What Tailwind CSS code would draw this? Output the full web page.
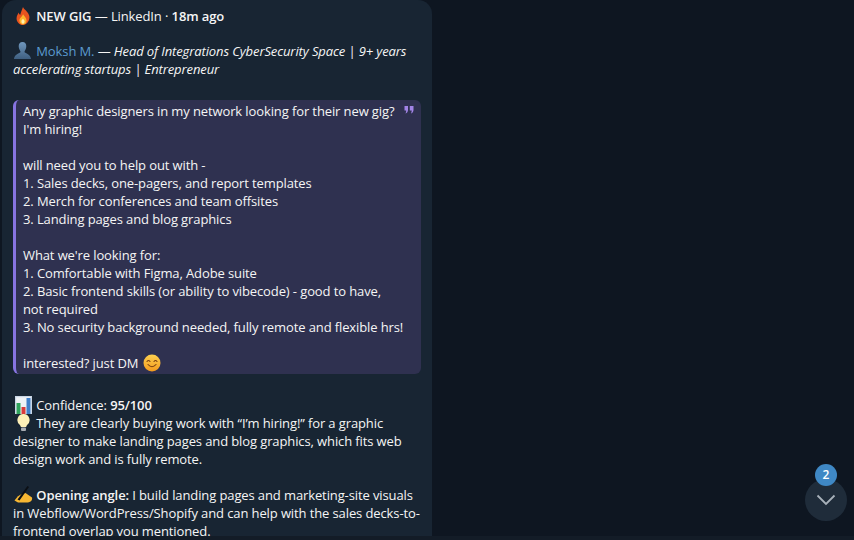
<!DOCTYPE html>
<html lang="en">
<head>
<meta charset="utf-8" />
<title>Chat</title>
<script src="https://cdn.jsdelivr.net/npm/@tailwindcss/browser@4"></script>
</head>
<body class="bg-[#0e1621] overflow-hidden">
<div class="relative w-[854px] h-[540px] overflow-hidden font-['Open_Sans',sans-serif] text-[13px] tracking-[-0.11px] leading-[18px] text-[#f5f5f5]">
  <div class="h-[536px] overflow-hidden">
    <div class="ml-[2px] w-[430px] h-[600px] rounded-t-[14px] bg-[#182533] pl-[11px] pr-[11px] pt-[7px]">
      <p class="h-[18px] whitespace-nowrap">
        <svg class="inline-block w-[18px] h-[18px] -my-[4px] align-baseline ml-[1px] mr-[1px]" viewBox="0 0 20 20"><path d="M10 0c1 3 6 5 7 10 1 5-3 10-7 10s-8-4-7-9c.4-2 1.500-3 2-5 .5 1 1 2.500 2 2.500C7.500 6 9 3 10 0z" fill="#e8531f"/><path d="M10 8c1 2 4 4 4 7s-2 4.500-4 4.500-4-1.500-4-4.500 3-4 4-7z" fill="#fdb32b"/><path d="M10 13c.8 1 1.800 1.800 1.800 3.200s-.8 2.300-1.800 2.300-1.800-.9-1.800-2.300.9-2.200 1.800-3.200z" fill="#fff0b0"/></svg>
        <b class="font-semibold">NEW GIG</b> — LinkedIn · <b class="font-semibold">18m ago</b>
      </p>
      <p class="mt-[17px]">
        <svg class="inline-block w-[19px] h-[19px] -my-[4px] align-baseline mr-[1px]" viewBox="0 0 20 20"><defs><linearGradient id="person" x1="0" y1="0" x2="0" y2="1"><stop offset="0" stop-color="#6f97bd"/><stop offset="1" stop-color="#3f5f80"/></linearGradient></defs><path d="M10 1c2.800 0 4 2 4 4.500S12.500 10 12 11.500c1 1.500 6.500 2 7 7.500H1c.5-5.500 6-6 7-7.500C7.500 10 6 8 6 5.500S7.200 1 10 1z" fill="url(#person)"/></svg>
        <span class="text-[#5b9bd0]">Moksh M.</span> — <i>Head of Integrations CyberSecurity Space | 9+ years accelerating startups | Entrepreneur</i>
      </p>
      <blockquote class="relative mt-[22px] whitespace-nowrap rounded-[6px] border-l-[3px] border-[#8774e1] bg-[#2f3150] pl-[7px] py-[2px]">
        <svg class="absolute right-[7px] top-[5px] w-[10px] h-[10px]" viewBox="0 0 10 10"><path d="M0.500 1h3.500v4c0 1.500-1 3-2.500 3.500C2 7.500 2.200 6.500 2.200 5.500H.5zM5.800 1h3.700v4c0 1.500-1 3-2.500 3.500.5-1 .7-2 .7-3H5.800z" fill="#a284e6"/></svg>
        <p>Any graphic designers in my network looking for their new gig?<br>I'm hiring!</p>
        <p class="mt-[18px]">will need you to help out with -<br>1. Sales decks, one-pagers, and report templates<br>2. Merch for conferences and team offsites<br>3. Landing pages and blog graphics</p>
        <p class="mt-[18px]">What we're looking for:<br>1. Comfortable with Figma, Adobe suite<br>2. Basic frontend skills (or ability to vibecode) - good to have,<br>not required<br>3. No security background needed, fully remote and flexible hrs!</p>
        <p class="mt-[18px]">interested? just DM
          <svg class="inline-block w-[18px] h-[18px] -my-[4px] align-baseline ml-[1px]" viewBox="0 0 18 18"><defs><linearGradient id="smile" x1="0" y1="0" x2="0" y2="1"><stop offset="0" stop-color="#fdd04f"/><stop offset="1" stop-color="#f39a1e"/></linearGradient></defs><circle cx="9" cy="9" r="8.500" fill="url(#smile)"/><path d="M4 7.500q1.500-2 3 0M11 7.500q1.500-2 3 0M5 10.500q4 4.500 8 0" fill="none" stroke="#7a3f10" stroke-width="1.100" stroke-linecap="round"/></svg>
        </p>
      </blockquote>
      <p class="mt-[22px]">
        <svg class="inline-block w-[17px] h-[18px] -my-[4px] align-baseline ml-[2px] mr-[1px]" viewBox="0 0 17 18"><rect width="17" height="18" fill="#c9d6e4"/><rect x="1.200" y="1.200" width="14.600" height="16.800" fill="#eef2f6"/><rect x="1.500" y="7" width="4" height="11" fill="#2fa35c"/><rect x="6.500" y="11" width="4" height="7" fill="#d93a3a"/><rect x="11.500" y="2" width="4" height="16" fill="#3f7fc9"/></svg>
        Confidence: <b class="font-semibold">95/100</b>
      </p>
      <p>
        <svg class="inline-block w-[17px] h-[18px] -my-[4px] align-baseline ml-[2px] mr-[1px]" viewBox="0 0 17 18"><path d="M8.500 0a6 6 0 0 1 3.800 10.700c-.8.800-1.100 1.500-1.100 2.300H5.800c0-.8-.3-1.500-1.100-2.300A6 6 0 0 1 8.500 0z" fill="#fdf0b8"/><rect x="6" y="13.500" width="5" height="3.500" rx="1" fill="#a9adb3"/></svg>
        They are clearly buying work with “I’m hiring!” for a graphic designer to make landing pages and blog graphics, which fits web design work and is fully remote.
      </p>
      <p class="mt-[18px]">
        <svg class="inline-block w-[19px] h-[18px] -my-[4px] align-baseline ml-[1px]" viewBox="0 0 18 18"><path d="M0 14.500c2.500-3.500 4.500-5.500 7.500-6.500l3.500-1 6.500 4.500c.8 3-2 5-5.500 5H3.500z" fill="#f7b733"/><path d="M3 13.500 13 0l1.500 1L5 14.500z" fill="#0b0f14"/></svg>
        <b class="font-semibold">Opening angle:</b> I build landing pages and marketing-site visuals in Webflow/WordPress/Shopify and can help with the sales decks-to-frontend overlap you mentioned.
      </p>
    </div>
  </div>
  <div class="h-[4px] bg-[#131c27]"></div>
  <div class="absolute right-[7px] bottom-[19px] flex h-[42px] w-[42px] items-center justify-center rounded-full bg-[#1f2c3a]">
    <svg class="w-[20px] h-[12px]" viewBox="0 0 20 12"><path d="M1.500 1.500 10 10l8.500-8.500" fill="none" stroke="#a8b1ba" stroke-width="1.800"/></svg>
  </div>
  <div class="absolute left-[815px] top-[464px] flex h-[22px] w-[22px] items-center justify-center rounded-full bg-[#3f88c5] text-[12px] font-semibold text-white">2</div>
</div>
</body>
</html>
